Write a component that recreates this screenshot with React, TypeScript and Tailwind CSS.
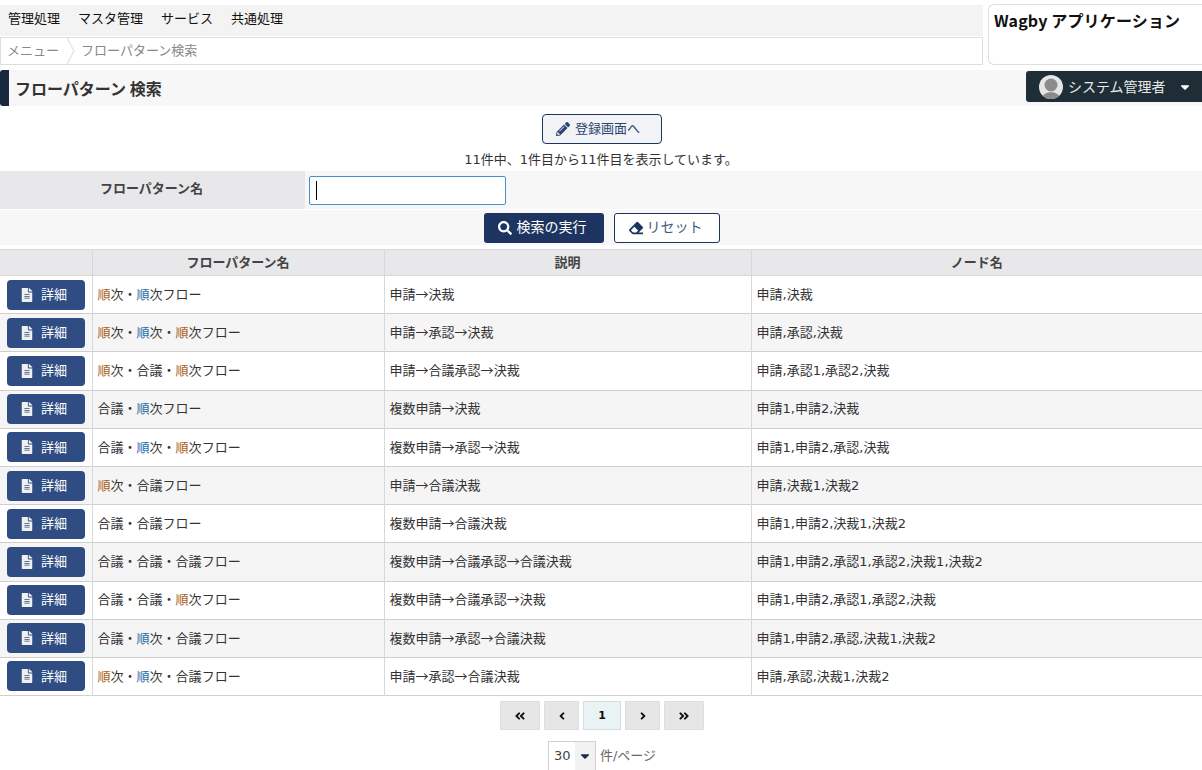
import React from 'react';
import { FaPencilAlt, FaSearch, FaEraser, FaFileAlt, FaCaretDown, FaAngleDoubleLeft, FaAngleDoubleRight, FaAngleLeft, FaAngleRight } from 'react-icons/fa';

const font = "font-['DejaVu_Sans','Noto_Sans_CJK_JP',sans-serif]";
const cjk = "font-['Noto_Sans_CJK_JP',sans-serif]";

// o = orange 順, b = blue 順 (the reference's colour fringes)
const ROWS: [string, string, string][] = [
  ['o次・b次フロー', '申請→決裁', '申請,決裁'],
  ['o次・b次・o次フロー', '申請→承認→決裁', '申請,承認,決裁'],
  ['o次・合議・o次フロー', '申請→合議承認→決裁', '申請,承認1,承認2,決裁'],
  ['合議・b次フロー', '複数申請→決裁', '申請1,申請2,決裁'],
  ['合議・b次・o次フロー', '複数申請→承認→決裁', '申請1,申請2,承認,決裁'],
  ['o次・合議フロー', '申請→合議決裁', '申請,決裁1,決裁2'],
  ['合議・合議フロー', '複数申請→合議決裁', '申請1,申請2,決裁1,決裁2'],
  ['合議・合議・合議フロー', '複数申請→合議承認→合議決裁', '申請1,申請2,承認1,承認2,決裁1,決裁2'],
  ['合議・合議・o次フロー', '複数申請→合議承認→決裁', '申請1,申請2,承認1,承認2,決裁'],
  ['合議・b次・合議フロー', '複数申請→承認→合議決裁', '申請1,申請2,承認,決裁1,決裁2'],
  ['o次・b次・合議フロー', '申請→承認→合議決裁', '申請,承認,決裁1,決裁2'],
];

function FlowName({ name }: { name: string }) {
  return (
    <>
      {name.split('').map((c, i) =>
        c === 'o' ? <span key={i} className="text-[#a8621c]">順</span>
        : c === 'b' ? <span key={i} className="text-[#2a6ca8]">順</span>
        : c
      )}
    </>
  );
}

// the arrow has to come from the CJK face to keep its full width
function Desc({ text }: { text: string }) {
  return (
    <>
      {text.split('').map((c, i) => (c === '→' ? <span key={i} className={`${cjk} leading-none`}>→</span> : c))}
    </>
  );
}

function PageButton({ children, width, active }: { children: React.ReactNode; width: string; active?: boolean }) {
  return (
    <div className={`${width} h-[29px] flex items-center justify-center border text-[11px] font-bold text-[#111] ${active ? 'bg-[#eaf3f4] border-[#d5dde0] pt-px' : 'bg-[#e6e6e6] border-[#dedede]'}`}>
      {children}
    </div>
  );
}

export default function App() {
  return (
    <div className={`${font} w-[1202px] h-[770px] overflow-hidden bg-white text-[13px] text-[#333]`}>
      {/* Header */}
      <div className="flex pt-[4px] h-[70px]">
        <div className="w-[983px] mt-px">
          <div className="h-[31px] bg-[#f3f3f3] flex items-center gap-[18px] pl-[8px] pb-[3px] text-[#111]">
            <span>管理処理</span>
            <span>マスタ管理</span>
            <span>サービス</span>
            <span>共通処理</span>
          </div>
          <div className="mt-px h-[28px] border border-[#dedede] flex items-center pl-[7px] text-[#888]">
            <span className="-ml-px pb-px">メニュー</span>
            <svg width="12" height="26" viewBox="0 0 12 26" className="ml-[7px]">
              <polyline points="1,0 8,13 1,26" fill="none" stroke="#e2e2e2" strokeWidth="1.2" />
            </svg>
            <span className="ml-[3px] pb-px">フローパターン検索</span>
          </div>
        </div>
        <div className="ml-[5px] flex-1 h-[61px] border border-r-0 border-[#dedede] rounded-l-[6px] pl-[5px] pt-[3px] text-[16px] font-bold text-[#111] leading-[24px]">
          <span className={`${cjk} tracking-[0.15px]`}>Wagby アプリケーション</span>
        </div>
      </div>

      {/* Title */}
      <div className="flex items-start h-[36px] bg-[#f7f7f7]">
        <div className="w-[9px] h-[36px] bg-[#18293f] rounded-l-[3px]" />
        <h1 className={`${cjk} ml-[6px] h-[36px] leading-[36px] text-[16px] font-bold text-[#333]`}>フローパターン 検索</h1>
        <div className="ml-auto mt-px w-[176px] h-[31px] bg-[#1f2d36] rounded-l-[3px] flex items-center pl-[13px] text-white">
          <svg width="24" height="24" viewBox="0 0 24 24">
            <circle cx="12" cy="12" r="12" fill="#e6e6e6" />
            <circle cx="12" cy="10" r="6.5" fill="#8b8b8b" />
            <path d="M4 21c2-5 14-5 16 0a12 12 0 0 1-16 0z" fill="#8b8b8b" />
          </svg>
          <span className="ml-[5px] pt-px text-[14px] text-[#e8e8e8]">システム管理者</span>
          <FaCaretDown className="ml-auto mr-[10px]" size={14} />
        </div>
      </div>

      {/* Register */}
      <div className="flex justify-center mt-[8px] pl-[2px]">
        <div className="w-[120px] h-[30px] border border-[#1d3461] rounded-[4px] bg-[#f1f3f7] text-[#2c4470] flex items-center justify-center gap-[5px] pr-[8px]">
          <FaPencilAlt size={14} />
          <span>登録画面へ</span>
        </div>
      </div>
      <p className="h-[27px] leading-[32px] text-center text-[#333]">11件中、1件目から11件目を表示しています。</p>

      {/* Search */}
      <div className="flex h-[38px] bg-[#f7f7f7]">
        <div className="w-[305px] pb-[2px] pr-[2px] bg-[#e8e8ea] flex items-center justify-center font-bold text-[#444]">フローパターン名</div>
        <div className="ml-[4px] mt-[5px] w-[197px] h-[29px] border border-[#4a90c8] rounded-[2px] bg-white flex items-center pl-[6px]">
          <div className="w-px h-[19px] bg-black" />
        </div>
      </div>
      <div className="mt-px h-[35px] bg-[#f7f7f7] flex justify-center items-start gap-[10px] pl-[2px] pt-[3px] text-[14px]">
        <div className="w-[120px] h-[30px] bg-[#1d3461] rounded-[3px] text-white flex items-center justify-center gap-[5px] pr-[4px] pb-px">
          <FaSearch size={14} />
          <span>検索の実行</span>
        </div>
        <div className="w-[106px] h-[30px] bg-white border border-[#1d3461] rounded-[3px] text-[#445a80] flex items-center justify-center gap-[4px] pr-[3px] pb-px">
          <FaEraser size={14} className="text-[#1d3461]" />
          <span>リセット</span>
        </div>
      </div>

      {/* Table */}
      <table className="mt-[4px] w-[1202px] table-fixed border-collapse">
        <colgroup>
          <col className="w-[92px]" />
          <col className="w-[292px]" />
          <col className="w-[367px]" />
          <col />
        </colgroup>
        <thead>
          <tr className="h-[26px] bg-[#e8e8ea] font-bold text-[#444] border-y border-[#d8d8d8]">
            <th className="border-r border-[#d6d8dc] font-bold" />
            <th className="border-r border-[#d6d8dc] font-bold">フローパターン名</th>
            <th className="border-r border-[#d6d8dc] font-bold">説明</th>
            <th className="font-bold">ノード名</th>
          </tr>
        </thead>
        <tbody>
          {ROWS.map((r, i) => (
            <tr key={i} className={`h-[38.2px] border-b border-[#cfcfcf] ${i % 2 ? 'bg-[#f5f5f5]' : 'bg-white'}`}>
              <td className="border-r border-[#d6d8dc] pl-[7px]">
                <div className="w-[78px] h-[30px] bg-[#2f4d83] rounded-[4px] text-white flex items-center justify-center gap-[7px] pr-[5px]">
                  <FaFileAlt size={14} className="text-[#f0f0f0]" />
                  <span>詳細</span>
                </div>
              </td>
              <td className="border-r border-[#d6d8dc] pl-[5px]"><FlowName name={r[0]} /></td>
              <td className="border-r border-[#d6d8dc] pl-[5px]"><Desc text={r[1]} /></td>
              <td className="pl-[5px]">{r[2]}</td>
            </tr>
          ))}
        </tbody>
      </table>

      {/* Pagination */}
      <div className="flex justify-center gap-[4px] mt-[5px] pl-[2px]">
        <PageButton width="w-[40px]"><FaAngleDoubleLeft size={12} /></PageButton>
        <PageButton width="w-[35px]"><FaAngleLeft size={12} /></PageButton>
        <PageButton width="w-[38px]" active>1</PageButton>
        <PageButton width="w-[35px]"><FaAngleRight size={12} /></PageButton>
        <PageButton width="w-[40px]"><FaAngleDoubleRight size={12} /></PageButton>
      </div>
      <div className="flex justify-center items-center mt-[11px] pl-[2px]">
        <div className="w-[48px] h-[30px] border border-[#d0d0d0] flex items-stretch">
          <span className="flex-1 flex items-center pl-[5px] pb-px text-[#444]">30</span>
          <span className="w-[20px] bg-[#f2f2f2] flex items-center justify-center text-[#1a2a4a]"><FaCaretDown size={14} /></span>
        </div>
        <span className="ml-[4px] text-[#666]">件/ページ</span>
      </div>
    </div>
  );
}
